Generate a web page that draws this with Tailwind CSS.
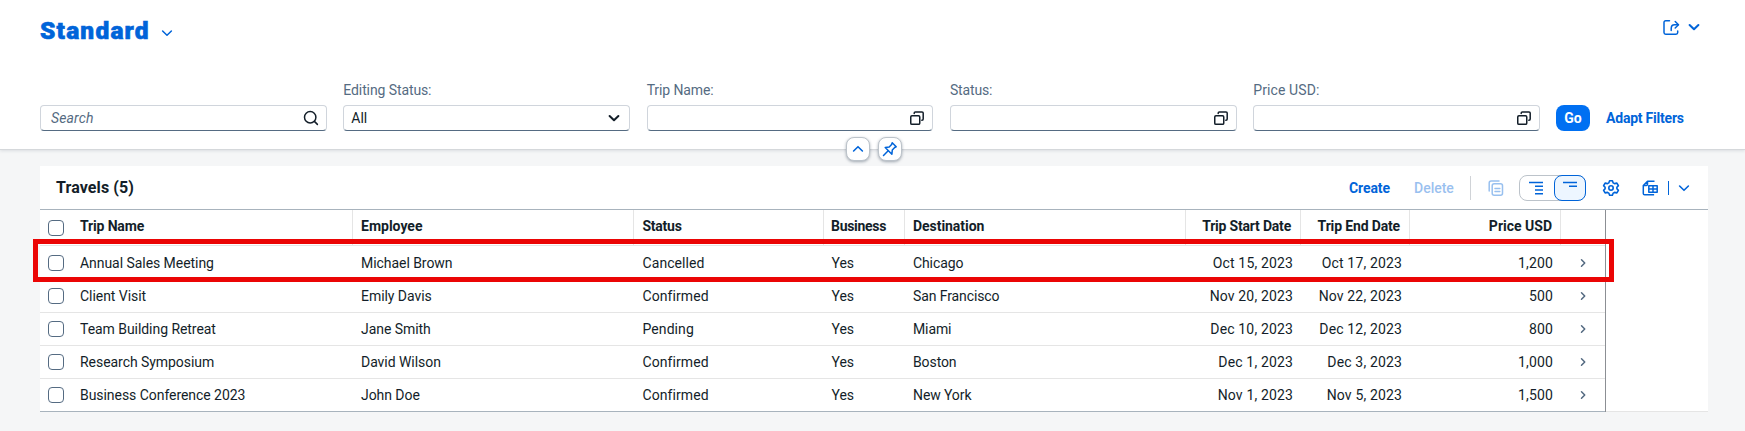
<!DOCTYPE html>
<html lang="en">
<head>
<meta charset="utf-8">
<title>Travels</title>
<script src="https://cdn.jsdelivr.net/npm/@tailwindcss/browser@4"></script>
</head>
<body class="h-[431px] w-[1745px] overflow-hidden bg-[#f5f6f7] font-['Roboto','Liberation_Sans',sans-serif] text-sm leading-[18px] text-[#131e29]">
<svg class="hidden">
  <symbol id="vh" viewBox="0 0 16 16" fill="none" stroke="currentColor" stroke-width="1.5" stroke-linecap="round" stroke-linejoin="round"><rect x="1.75" y="5.75" width="9" height="8.6" rx="1.2"/><path d="M5.2 3.6V3.1c0-.7.5-1.200 1.200-1.200H13c.7 0 1.200.5 1.200 1.200V9c0 .7-.5 1.200-1.200 1.200h-.2"/></symbol>
  <symbol id="down" viewBox="0 0 16 16" fill="none" stroke="currentColor" stroke-linecap="round" stroke-linejoin="round"><path d="M3.600 6 8 10.300 12.400 6"/></symbol>
</svg>

<header class="relative flex h-[150px] flex-col border-b border-[#d5d8db] bg-white px-10 shadow-[0_1px_3px_rgba(34,53,72,0.12)]">
  <div class="flex h-[81px] items-start justify-between pr-[3px]">
    <div class="flex items-center gap-[10px] pt-[16px] text-[#0064d9]">
      <h1 class="w-[109px] text-[24.5px] leading-[29px] font-black whitespace-nowrap tracking-[1.200px] [-webkit-text-stroke:0.6px_#0064d9]">Standard</h1>
      <svg class="mt-[5px] size-4 stroke-[1.5]"><use href="#down"/></svg>
    </div>
    <div class="flex items-center gap-[6px] pt-[18px] text-[#0064d9]">
      <svg class="size-[18px]" viewBox="0 0 18 18" fill="none" stroke="currentColor" stroke-width="1.500" stroke-linecap="round" stroke-linejoin="round"><path d="M7.500 2.700H3.700C2.700 2.700 2 3.400 2 4.400v10.100c0 1 .7 1.700 1.700 1.700h10.300c1 0 1.700-.7 1.700-1.700V13"/><path d="M9.200 12.500v-2c0-2.300 1.300-3.700 3.400-3.700h3.600"/><path d="m13.200 3.500 3.300 3.300-3.300 3.200"/></svg>
      <svg class="size-4 stroke-2"><use href="#down"/></svg>
    </div>
  </div>
  <div class="flex items-end gap-[16.660px]">
    <div class="flex h-[26px] w-[286.670px] items-center justify-between rounded border border-[#d0d5dc] border-b-[#556b82] pr-[7px] pl-[10px]">
      <span class="tracking-[0.15px] text-[#556b82] italic">Search</span>
      <svg class="size-4" viewBox="0 0 16 16" fill="none" stroke="currentColor" stroke-width="1.500" stroke-linecap="round"><circle cx="7.200" cy="7.200" r="5.700"/><path d="m11.400 11.400 3 3"/></svg>
    </div>
    <div class="flex w-[286.670px] flex-col gap-[6px]">
      <label class="tracking-[-0.1px] text-[#556b82]">Editing Status:</label>
      <div class="flex h-[26px] items-center justify-between rounded border border-[#d0d5dc] border-b-[#556b82] pr-[7px] pl-[7px]"><span>All</span><svg class="size-4 stroke-2"><use href="#down"/></svg></div>
    </div>
    <div class="flex w-[286.670px] flex-col gap-[6px]">
      <label class="tracking-[-0.1px] text-[#556b82]">Trip Name:</label>
      <div class="flex h-[26px] items-center justify-end rounded border border-[#d0d5dc] border-b-[#556b82] pr-[7px]"><svg class="size-4"><use href="#vh"/></svg></div>
    </div>
    <div class="flex w-[286.670px] flex-col gap-[6px]">
      <label class="tracking-[-0.15px] text-[#556b82]">Status:</label>
      <div class="flex h-[26px] items-center justify-end rounded border border-[#d0d5dc] border-b-[#556b82] pr-[7px]"><svg class="size-4"><use href="#vh"/></svg></div>
    </div>
    <div class="flex w-[286.670px] flex-col gap-[6px]">
      <label class="tracking-[0.1px] text-[#556b82]">Price USD:</label>
      <div class="flex h-[26px] items-center justify-end rounded border border-[#d0d5dc] border-b-[#556b82] pr-[7px]"><svg class="size-4"><use href="#vh"/></svg></div>
    </div>
    <div class="-ml-[0.500px] flex items-center gap-[16px]">
      <button class="h-[26px] w-[34px] rounded-lg bg-[#0070f2] font-bold text-white">Go</button>
      <button class="font-bold tracking-[-0.22px] whitespace-nowrap text-[#0064d9]">Adapt Filters</button>
    </div>
  </div>
  <div class="absolute top-[137px] left-[846px] flex gap-2 text-[#0064d9]">
    <button class="flex size-6 items-center justify-center rounded-lg border border-[#bcc3ca] bg-white shadow-[0_1px_3px_rgba(34,53,72,0.4)]"><svg class="size-4 rotate-180 stroke-[1.600]"><use href="#down"/></svg></button>
    <button class="flex size-6 items-center justify-center rounded-lg border border-[#bcc3ca] bg-white shadow-[0_1px_3px_rgba(34,53,72,0.4)]"><svg class="size-4" viewBox="0 0 16 16" fill="none" stroke="currentColor" stroke-width="1.500" stroke-linecap="round" stroke-linejoin="round"><path d="M1.500 14.500 5.700 10.300M10.200 1.800l4 4-1.500.7-2.400 2.500-.4 4.200L3.200 6.500 7.200 6l2.400-2.500z"/></svg></button>
  </div>
</header>

<main class="relative mt-4 ml-10 h-[246px] w-[1668px] border-b border-[#e5e5e5] bg-white">
  <div class="flex h-[44px] items-center justify-between border-b border-[#a8b3bd] pr-4 pl-4">
    <h2 class="text-base font-bold tracking-[0.1px]">Travels (5)</h2>
    <div class="flex items-center pt-px text-[#0064d9]">
      <button class="w-[65px] text-left font-bold tracking-[-0.1px]">Create</button>
      <button class="w-[56px] text-left font-medium opacity-40">Delete</button>
      <div class="mr-[17px] h-6 w-px bg-[#d0d3d7]"></div>
      <svg class="mr-[15px] size-4 opacity-40" viewBox="0 0 16 16" fill="none" stroke="currentColor" stroke-width="1.500" stroke-linecap="round" stroke-linejoin="round"><rect x="4.200" y="3.700" width="10.300" height="11.500" rx="2"/><path d="M1.200 11V3c0-1.200.8-2 2-2H11M7 8.500h4.800M7 11.500h4.800"/></svg>
      <div class="mr-[16px] flex h-[26px] w-[67px] justify-between rounded-lg border border-[#bcc3ca]">
        <svg class="mt-[3px] ml-[8px] size-4" viewBox="0 0 16 16" fill="none" stroke="currentColor" stroke-width="1.500"><path d="M1 3.500h14M7 7.200H15M7 11H15M7 14.800H15"/></svg>
        <div class="-my-px -mr-px flex h-[26px] w-8 items-start justify-center rounded-lg border border-[#0064d9] bg-[#edf6ff]"><svg class="mt-[3px] size-4" viewBox="0 0 16 16" fill="none" stroke="currentColor" stroke-width="1.500"><path d="M1 3.500h14M7 7.200h8"/></svg></div>
      </div>
      <svg class="mr-[22px] size-[18px]" viewBox="0 0 18 18" fill="none" stroke="currentColor" stroke-width="1.600" stroke-linejoin="round"><path d="M7.600 1.700h2.800l.8 2.200 1.300.7 2.400-.5 1.500 2.500-1.500 1.700v1.400l1.500 1.700-1.500 2.500-2.400-.5-1.300.7-.8 2.200H7.600l-.8-2.200-1.300-.7-2.400.5-1.500-2.500 1.500-1.700V8.300L1.600 6.600l1.500-2.500 2.400.5 1.300-.7z"/><circle cx="9" cy="9" r="2.200"/></svg>
      <svg class="mr-[10px] size-4" viewBox="0 0 16 16" fill="none" stroke="currentColor" stroke-width="1.500" stroke-linejoin="round"><path d="M12.500 1.300H5.500L1.300 5.500v8c0 .8.500 1.300 1.300 1.300h9.500M5.500 1.300v3c0 .7-.4 1.200-1.200 1.200h-3"/><path d="M6.800 5.800h8.400v6.400H6.800zM6.800 9h8.400M11 5.800v6.400"/></svg>
      <div class="mr-[7px] h-[14px] w-px bg-[#0064d9]"></div>
      <svg class="size-4 stroke-[1.600]"><use href="#down"/></svg>
    </div>
  </div>
  <div class="w-[1566px] border-r border-r-[#8c8f94]" id="table">
    <div class="grid h-[36px] grid-cols-[313px_281px_190px_81px_281px_115px_109px_151px_44px] border-b border-[#e5e5e5] leading-[33px] font-bold tracking-[-0.15px] whitespace-nowrap">
      <div class="flex border-r border-[#e5e5e5] pl-2"><i class="mt-[10px] mr-4 size-4 rounded border border-[#556b82]"></i>Trip Name</div>
      <div class="border-r border-[#e5e5e5] pl-2 tracking-normal">Employee</div>
      <div class="border-r border-[#e5e5e5] pl-[8.500px] tracking-[-0.250px]">Status</div>
      <div class="border-r border-[#e5e5e5] pl-[7px] tracking-[-0.3px]">Business</div>
      <div class="border-r border-[#e5e5e5] pl-2 tracking-[-0.050px]">Destination</div>
      <div class="border-r border-[#e5e5e5] pr-[9px] text-right tracking-[-0.2px]">Trip Start Date</div>
      <div class="border-r border-[#e5e5e5] pr-[9px] text-right">Trip End Date</div>
      <div class="border-r border-[#e5e5e5] pr-[8px] text-right tracking-normal">Price USD</div>
      <div></div>
    </div>
  </div>
  <div class="absolute top-[73px] -left-[7px] h-[43px] w-[1581px] border-[5px] border-[#eb0505]"></div>
</main>
<script>
const rows = [
  ["Annual Sales Meeting", "Michael Brown", "Cancelled", "Chicago", "Oct 15, 2023", "Oct 17, 2023", "1,200"],
  ["Client Visit", "Emily Davis", "Confirmed", "San Francisco", "Nov 20, 2023", "Nov 22, 2023", "500"],
  ["Team Building Retreat", "Jane Smith", "Pending", "Miami", "Dec 10, 2023", "Dec 12, 2023", "800"],
  ["Research Symposium", "David Wilson", "Confirmed", "Boston", "Dec 1, 2023", "Dec 3, 2023", "1,000"],
  ["Business Conference 2023", "John Doe", "Confirmed", "New York", "Nov 1, 2023", "Nov 5, 2023", "1,500"]
];
document.getElementById("table").insertAdjacentHTML("beforeend", rows.map(r => `
<div class="grid h-[33px] grid-cols-[313px_281px_190px_81px_281px_115px_109px_151px_44px] items-center border-b border-[#e5e5e5] whitespace-nowrap tracking-[-0.05px] nth-2:h-[34px] nth-2:pt-px last:border-[#a8b3bd]">
  <div class="flex items-center pl-2"><i class="mr-4 size-4 rounded border border-[#556b82]"></i>${r[0]}</div>
  <div class="pl-2">${r[1]}</div><div class="pl-[8.500px] tracking-[0.08px]">${r[2]}</div><div class="pl-[7.500px]">Yes</div><div class="pl-2 tracking-[-0.1px]">${r[3]}</div>
  <div class="pr-2 text-right tracking-[0.15px]">${r[4]}</div><div class="pr-2 text-right tracking-[0.15px]">${r[5]}</div><div class="pr-2 text-right tracking-[0.15px]">${r[6]}</div>
  <svg class="ml-[14px] size-4 -rotate-90 scale-[.75] stroke-2 text-[#556b82]"><use href="#down"/></svg>
</div>`).join(""));
</script>
</body>
</html>
